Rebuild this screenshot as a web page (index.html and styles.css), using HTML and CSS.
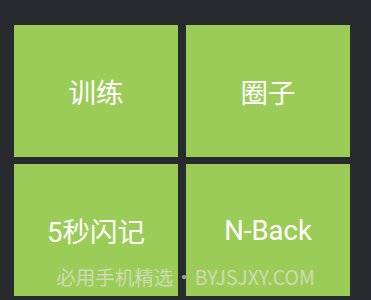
FILE: index.html
```html
<!DOCTYPE html>
<html>
<head>
<meta charset="utf-8">
<link rel="stylesheet" href="styles.css">
</head>
<body>
<div class="grid">
  <div class="tile">训练</div>
  <div class="tile">圈子</div>
  <div class="tile">5秒闪记</div>
  <div class="tile">N-Back</div>
</div>
<div class="watermark">必用手机精选<span class="dot">•</span>BYJSJXY.COM</div>
</body>
</html>
```
FILE: styles.css
```css
html, body {
  margin: 0;
  padding: 0;
  background: #272b2d;
  width: 371px;
  height: 300px;
  overflow: hidden;
}
body {
  position: relative;
}
.grid {
  display: grid;
  grid-template-columns: 164px 164px;
  grid-template-rows: 132px 132px;
  column-gap: 8px;
  row-gap: 7px;
  padding: 25px 0 0 14px;
}
.tile {
  background: #9bcc57;
  color: #ffffff;
  font-family: Roboto, "Noto Sans CJK SC", sans-serif;
  font-size: 27.5px;
  display: flex;
  align-items: center;
  justify-content: center;
}
.watermark {
  position: absolute;
  left: 0;
  width: 371px;
  top: 264px;
  text-align: center;
  font-family: "Noto Sans CJK SC", "Noto Sans", sans-serif;
  font-size: 19.5px;
  line-height: 26px;
  color: rgba(235, 228, 235, 0.64);
  white-space: nowrap;
}
.dot {
  margin: 0 1px;
}
```
